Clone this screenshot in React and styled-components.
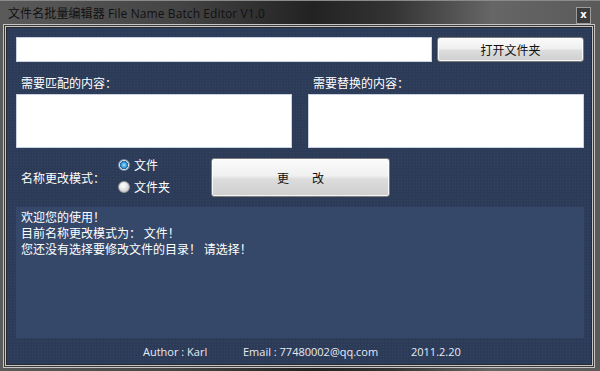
import React from "react";
import styled, { createGlobalStyle } from "styled-components";

const GlobalStyle = createGlobalStyle`
  html, body {
    margin: 0;
    padding: 0;
    background: #4a4a4a;
  }
  * {
    box-sizing: border-box;
  }
`;

const cjk = `"Noto Sans CJK SC", "Noto Sans", sans-serif`;
const latin = `"Open Sans", "Noto Sans CJK SC", sans-serif`;

const Window = styled.div`
  width: 600px;
  height: 371px;
  display: flex;
  flex-direction: column;
  padding: 0 5px 3px 3px;
  background: linear-gradient(90deg, #5a5a5a 0%, #444 30%, #222 52%, #333 65%, #666 82%, #5a5a5a 100%);
  border-top: 1px solid #8a8a8a;
  overflow: hidden;
`;

const TitleBar = styled.div`
  height: 23px;
  display: flex;
  align-items: center;
  justify-content: space-between;
  padding: 0 4px 0 5px;
`;

const Title = styled.div`
  font-family: ${latin};
  font-size: 12px;
  color: #111;
  letter-spacing: 0.1px;
  span {
    font-family: ${cjk};
  }
`;

const CloseButton = styled.div`
  width: 15px;
  height: 17px;
  margin-top: 5px;
  border: 1px solid #9c9c9c;
  background: #3c3c3c;
  color: #fff;
  font-family: "DejaVu Sans", sans-serif;
  font-weight: bold;
  font-size: 10px;
  line-height: 14px;
  text-align: center;
`;

const OuterFrame = styled.div`
  flex: 1;
  display: flex;
  border: 1px solid #c4c4c4;
  padding: 1px;
  background: #3a3a3a;
`;

const InnerFrame = styled.div`
  flex: 1;
  display: flex;
  border: 1px solid #c4c4c4;
  padding: 1px;
  background: #2a2a2a;
`;

const Content = styled.div`
  flex: 1;
  display: flex;
  flex-direction: column;
  padding: 9px 7px 0 9px;
  background-color: #2c3b58;
  background-image: radial-gradient(rgba(255, 255, 255, 0.05) 0.8px, transparent 0.8px);
  background-size: 3px 3px;
  font-family: ${cjk};
  font-size: 12px;
  color: #fff;
`;

const TopRow = styled.div`
  display: flex;
  gap: 5px;
  height: 25px;
`;

const Field = styled.div`
  background: #fff;
  border: 1px solid #c8d2e2;
  flex: ${(p) => (p.$grow ? 1 : "none")};
  height: ${(p) => p.$height || "100%"};
`;

const Button = styled.div`
  width: ${(p) => p.$width};
  height: 100%;
  display: flex;
  align-items: center;
  justify-content: center;
  gap: ${(p) => p.$gap || "0px"};
  border: 1px solid #7c7c7c;
  border-radius: 3px;
  background: linear-gradient(180deg, #fbfbfb 0%, #f0f0f0 45%, #dcdcdc 55%, #cfcfcf 100%);
  box-shadow: inset 0 0 0 1px rgba(255, 255, 255, 0.8);
  color: #111;
  font-family: ${cjk};
  font-size: 12px;
`;

const Columns = styled.div`
  display: grid;
  grid-template-columns: 1fr 1fr;
  column-gap: 16px;
  margin-top: 13px;
`;

const Column = styled.div`
  display: flex;
  flex-direction: column;
`;

const Label = styled.div`
  line-height: 16px;
  padding-left: 5px;
  margin-bottom: 3px;
  width: ${(p) => p.$width || "auto"};
`;

const ModeRow = styled.div`
  display: flex;
  align-items: center;
  height: 39px;
  margin-top: 10px;
`;

const ModeLabel = styled.div`
  width: 102px;
  padding-left: 5px;
  line-height: 16px;
`;

const RadioGroup = styled.div`
  width: 93px;
  height: 100%;
  display: flex;
  flex-direction: column;
  gap: 8px;
`;

const RadioItem = styled.div`
  height: 14px;
  display: flex;
  align-items: center;
  gap: 4px;
  line-height: 14px;
`;

const RadioDot = styled.span`
  width: 12px;
  height: 12px;
  border-radius: 50%;
  border: 1px solid ${(p) => (p.$checked ? "#6f8aa3" : "#9a9a9a")};
  background: ${(p) =>
    p.$checked
      ? "radial-gradient(circle, #9fe2ff 0%, #3aa0e0 35%, #1f5f95 55%, #e6e6e6 62%, #bfc6cc 100%)"
      : "radial-gradient(circle at 40% 35%, #ffffff 0%, #e6e6e6 45%, #b4b4b4 100%)"};
`;

const Log = styled.div`
  margin-top: 10px;
  height: 131px;
  background: #354869;
  padding: 2px 5px;
  line-height: 16px;
`;

const Footer = styled.div`
  flex: 1;
  display: grid;
  grid-template-columns: 100px 168px auto;
  align-items: center;
  padding-left: 127px;
  font-family: ${latin};
  font-size: 11px;
  color: #e6ebf5;
`;

export default function App() {
  return (
    <>
      <GlobalStyle />
      <Window>
        <TitleBar>
          <Title>
            <span>文件名批量编辑器</span> File Name Batch Editor V1.0
          </Title>
          <CloseButton>x</CloseButton>
        </TitleBar>
        <OuterFrame>
          <InnerFrame>
            <Content>
              <TopRow>
                <Field $grow />
                <Button $width="147px">打开文件夹</Button>
              </TopRow>
              <Columns>
                <Column>
                  <Label>需要匹配的内容：</Label>
                  <Field $height="54px" />
                </Column>
                <Column>
                  <Label>需要替换的内容：</Label>
                  <Field $height="54px" />
                </Column>
              </Columns>
              <ModeRow>
                <ModeLabel>名称更改模式：</ModeLabel>
                <RadioGroup>
                  <RadioItem>
                    <RadioDot $checked />
                    文件
                  </RadioItem>
                  <RadioItem>
                    <RadioDot />
                    文件夹
                  </RadioItem>
                </RadioGroup>
                <Button $width="179px" $gap="23px">
                  <span>更</span>
                  <span>改</span>
                </Button>
              </ModeRow>
              <Log>
                <div>欢迎您的使用！</div>
                <div>目前名称更改模式为： 文件！</div>
                <div>您还没有选择要修改文件的目录！ 请选择！</div>
              </Log>
              <Footer>
                <span>Author : Karl</span>
                <span>Email : 77480002@qq.com</span>
                <span>2011.2.20</span>
              </Footer>
            </Content>
          </InnerFrame>
        </OuterFrame>
      </Window>
    </>
  );
}
